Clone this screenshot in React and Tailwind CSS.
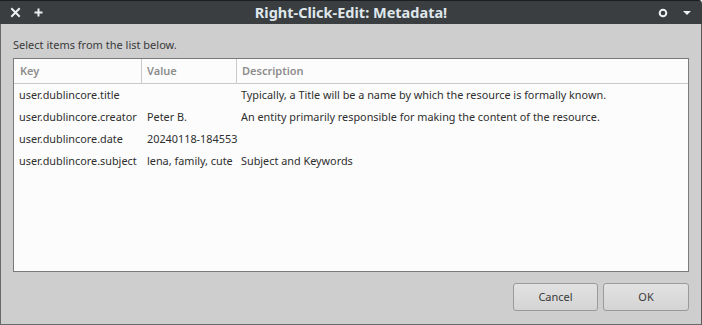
import React from 'react';

const rows = [
  { key: 'user.dublincore.title', value: '', desc: 'Typically, a Title will be a name by which the resource is formally known.' },
  { key: 'user.dublincore.creator', value: 'Peter B.', desc: 'An entity primarily responsible for making the content of the resource.' },
  { key: 'user.dublincore.date', value: '20240118-184553', desc: '' },
  { key: 'user.dublincore.subject', value: 'lena, family, cute', desc: 'Subject and Keywords' },
];

const font = { fontFamily: '"Noto Sans", "Open Sans", sans-serif' };

export default function App() {
  return (
    <div className="w-[702px] h-[325px] flex flex-col bg-[#cecece] overflow-hidden rounded-tr-[4px]" style={font}>
      {/* Title bar */}
      <div className="h-[24px] shrink-0 flex items-center bg-[#3a3e40] border-t border-[#1c1e1f]">
        <div className="flex items-center gap-[12px] pl-[10px]">
          <svg width="11" height="11" viewBox="0 0 11 11">
            <path d="M2 2 L9 9 M9 2 L2 9" stroke="#eef0f1" strokeWidth="2" strokeLinecap="square" />
          </svg>
          <svg width="11" height="11" viewBox="0 0 11 11">
            <path d="M5.5 1.5 V9.5 M1.5 5.5 H9.5" stroke="#eef0f1" strokeWidth="2" />
          </svg>
        </div>
        <div className="flex-1 text-center text-[14.5px] font-bold text-[#dfe7ec] leading-none">
          Right-Click-Edit: Metadata!
        </div>
        <div className="flex items-center gap-[14px] pr-[10px]">
          <svg width="10" height="10" viewBox="0 0 10 10">
            <circle cx="5" cy="5" r="3.3" stroke="#eef0f1" strokeWidth="2" fill="none" />
          </svg>
          <svg width="10" height="10" viewBox="0 0 10 10">
            <path d="M1 3 H9 L5 7 Z" fill="#eef0f1" />
          </svg>
        </div>
      </div>

      {/* Body */}
      <div className="flex-1 flex flex-col border-l border-r border-b border-l-[#6a6a6a] border-r-[#5a5a5a] border-b-[#6a6a6a] pl-[12px] pr-[12px]">
        <div className="text-[11px] text-[#3a3a3a] pt-[13px] h-[34px]">Select items from the list below.</div>
        <div className="h-[214px] bg-[#fcfcfc] border border-[#7a7a7a] text-[10.85px] text-[#2e2e2e]">
          <div className="flex h-[25px] border-b border-[#cacaca] text-[#8d8d8d] font-semibold text-[11px]">
            <div className="w-[128px] pl-[6px] flex items-center border-r border-[#cacaca]">Key</div>
            <div className="w-[95px] pl-[5px] flex items-center border-r border-[#cacaca]">Value</div>
            <div className="flex-1 pl-[5px] flex items-center">Description</div>
          </div>
          <div>
            {rows.map((r) => (
              <div key={r.key} className="flex h-[22px] items-center whitespace-nowrap">
                <div className="w-[128px] pl-[5px]">{r.key}</div>
                <div className="w-[95px] pl-[5px]">{r.value}</div>
                <div className="flex-1 pl-[4px]">{r.desc}</div>
              </div>
            ))}
          </div>
        </div>
        <div className="flex justify-end gap-[5px] pt-[11px]">
          <button className="w-[85px] h-[28px] rounded-[3px] border border-[#9a9a9a] bg-gradient-to-b from-[#e2e2e2] to-[#d4d4d4] text-[11px] text-[#3a3a3a]">
            Cancel
          </button>
          <button className="w-[86px] h-[28px] rounded-[3px] border border-[#9a9a9a] bg-gradient-to-b from-[#e2e2e2] to-[#d4d4d4] text-[11px] text-[#3a3a3a]">
            OK
          </button>
        </div>
      </div>
    </div>
  );
}
